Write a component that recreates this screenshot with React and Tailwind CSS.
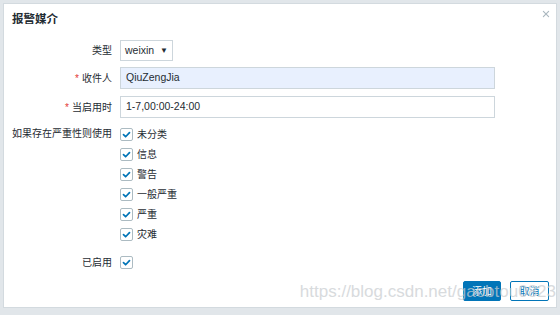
import { IoClose } from "react-icons/io5";

const font = { fontFamily: '"Liberation Sans", Arial, "Noto Sans CJK SC", sans-serif' };

const SEVERITIES = ["未分类", "信息", "警告", "一般严重", "严重", "灾难"];

function Check() {
  return (
    <span className="grid h-[13px] w-[13px] shrink-0 place-items-center rounded-[2px] border border-[#acbbc2] bg-white">
      <svg viewBox="0 0 12 12" className="h-[9px] w-[9px]">
        <path d="M2 6.2 L4.8 9 L10 3.4" fill="none" stroke="#0275b8" strokeWidth="2.3" strokeLinecap="round" strokeLinejoin="round" />
      </svg>
    </span>
  );
}

function Row({ label, required, children, className = "" }) {
  return (
    <div className={`flex items-center ${className}`}>
      <div className="w-[108px] shrink-0 whitespace-nowrap text-right text-[10px] text-[#1f2c33]">
        {required ? <span className="mr-[3px] text-[#e33734]">*</span> : null}
        {label}
      </div>
      <div className="ml-[8px] flex-1">{children}</div>
    </div>
  );
}

export default function App() {
  return (
    <div className="relative h-[315px] w-[560px] overflow-hidden bg-[#e1e6ea] pl-[3px] pt-[3px]" style={font}>
      <div className="relative flex h-[305px] w-[554px] flex-col border border-[#d3dadf] bg-white">
        <div className="flex h-[32px] items-center pl-[8px] text-[11.5px] font-bold text-[#1f2c33]">报警媒介</div>
        <IoClose className="absolute right-[4px] top-[4px] h-[12px] w-[12px] text-[#aab7bf]" />

        <div className="mt-[4px] flex flex-col">
          <Row label="类型" className="h-[21px]">
            <div className="flex h-[21px] w-[53px] items-center justify-between border border-[#cdd6dc] bg-white px-[4px] text-[10.5px] text-[#1f2c33]">
              <span>weixin</span>
              <span className="text-[8px]">▼</span>
            </div>
          </Row>
          <Row label="收件人" required className="mt-[6px] h-[22px]">
            <div className="flex h-[22px] w-[375px] items-center border border-[#cdd6dc] bg-[#e8f0fe] px-[5px] text-[10.5px] text-[#1f2c33]">
              QiuZengJia
            </div>
          </Row>
          <Row label="当启用时" required className="mt-[7px] h-[22px]">
            <div className="flex h-[22px] w-[375px] items-center border border-[#cdd6dc] bg-white px-[5px] text-[10.5px] text-[#1f2c33]">
              1-7,00:00-24:00
            </div>
          </Row>

          <div className="mt-[6px] flex">
            <div className="w-[108px] shrink-0 whitespace-nowrap text-right text-[10px] leading-[20px] text-[#1f2c33]">如果存在严重性则使用</div>
            <div className="ml-[8px] flex flex-col">
              {SEVERITIES.map((s) => (
                <div key={s} className="flex h-[20px] items-center gap-[4px] text-[10px] text-[#1f2c33]">
                  <Check />
                  <span>{s}</span>
                </div>
              ))}
            </div>
          </div>

          <Row label="已启用" className="mt-[8px] h-[20px]">
            <Check />
          </Row>
        </div>

        <div className="mt-auto mb-[6px] flex justify-end gap-[9px] pr-[7px]">
          <button type="button" className="flex h-[20px] w-[38px] items-center justify-center rounded-[2px] border border-[#0275b8] bg-[#0275b8] text-[10px] text-white">
            添加
          </button>
          <button type="button" className="flex h-[20px] w-[39px] items-center justify-center rounded-[2px] border border-[#0275b8] bg-white text-[10px] text-[#0275b8]">
            取消
          </button>
        </div>

        <div className="pointer-events-none absolute bottom-[3px] right-[0px] text-[17px] text-[#c8ccd0] opacity-70" style={{ fontFamily: '"Liberation Sans", Arial, sans-serif' }}>
          https://blog.csdn.net/gaobtou0823
        </div>
      </div>
    </div>
  );
}
